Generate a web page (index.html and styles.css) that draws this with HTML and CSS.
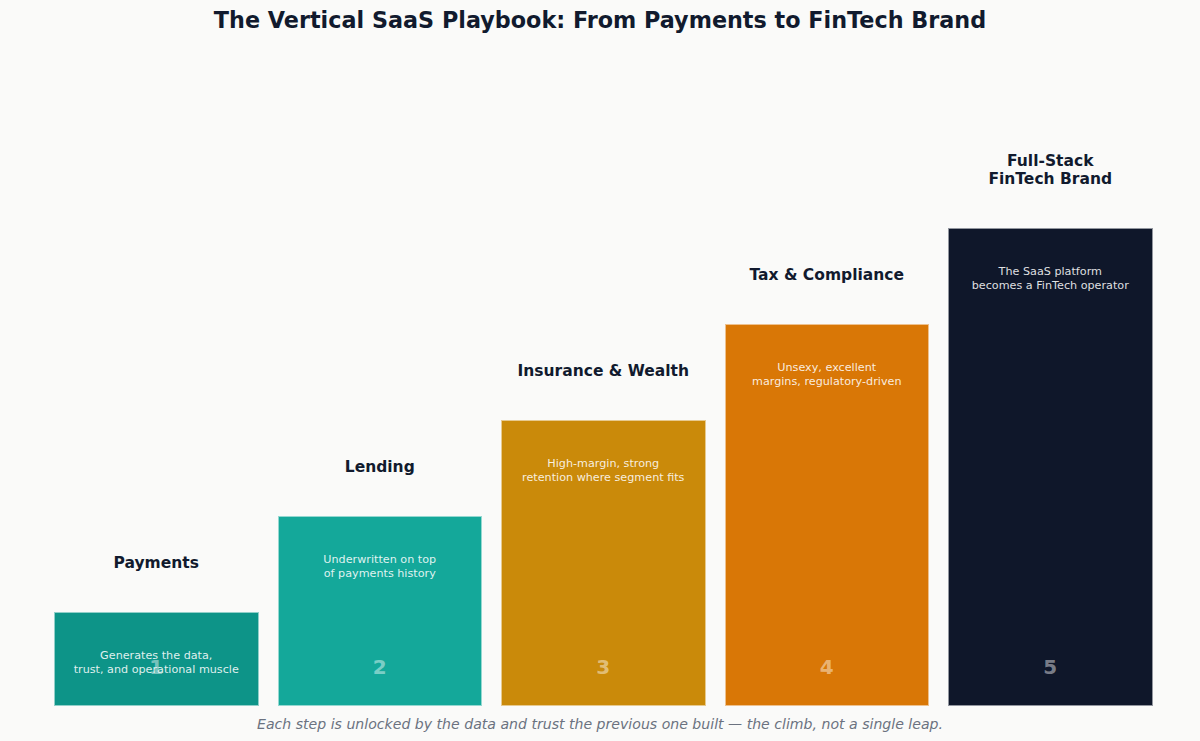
FILE: index.html
```html
<!DOCTYPE html>
<html lang="en">
<head>
<meta charset="utf-8">
<title>The Vertical SaaS Playbook</title>
<link rel="stylesheet" href="styles.css">
</head>
<body>
<div class="page">
  <h1 class="title">The Vertical SaaS Playbook: From Payments to FinTech Brand</h1>
  <div class="chart">
    <div class="step">
      <div class="label">Payments</div>
      <div class="bar bar-1" style="height:94px">
        <div class="desc">Generates the data,<br>trust, and operational muscle</div>
        <div class="num">1</div>
      </div>
    </div>
    <div class="step">
      <div class="label">Lending</div>
      <div class="bar bar-2" style="height:190px">
        <div class="desc">Underwritten on top<br>of payments history</div>
        <div class="num">2</div>
      </div>
    </div>
    <div class="step">
      <div class="label">Insurance &amp; Wealth</div>
      <div class="bar bar-3" style="height:286px">
        <div class="desc">High-margin, strong<br>retention where segment fits</div>
        <div class="num">3</div>
      </div>
    </div>
    <div class="step">
      <div class="label">Tax &amp; Compliance</div>
      <div class="bar bar-4" style="height:382px">
        <div class="desc">Unsexy, excellent<br>margins, regulatory-driven</div>
        <div class="num">4</div>
      </div>
    </div>
    <div class="step">
      <div class="label">Full-Stack<br>FinTech Brand</div>
      <div class="bar bar-5" style="height:478px">
        <div class="desc">The SaaS platform<br>becomes a FinTech operator</div>
        <div class="num">5</div>
      </div>
    </div>
  </div>
  <div class="footer">Each step is unlocked by the data and trust the previous one built — the climb, not a single leap.</div>
</div>
</body>
</html>
```

FILE: styles.css
```css
* { box-sizing: border-box; }
html, body {
  margin: 0;
  padding: 0;
  background: #fafaf9;
}
body {
  font-family: "DejaVu Sans", "Liberation Sans", sans-serif;
  color: #0f172a;
}
.page {
  width: 1200px;
  height: 741px;
  display: flex;
  flex-direction: column;
}
.title {
  margin: 0;
  padding-top: 7px;
  font-size: 22.3px;
  line-height: 26px;
  font-weight: bold;
  text-align: center;
  color: #111a2e;
}
.chart {
  flex: 1;
  display: flex;
  align-items: flex-end;
  gap: 19px;
  padding: 0 47px 0 54px;
}
.step {
  width: 204.5px;
  display: flex;
  flex-direction: column;
}
.label {
  font-size: 15.5px;
  line-height: 18px;
  font-weight: bold;
  text-align: center;
  margin-bottom: 40px;
  color: #111a2e;
}
.bar {
  position: relative;
  border: 1px solid rgba(255, 255, 255, 0.55);
  text-align: center;
}
.bar-1 { background: #0d9488; }
.bar-2 { background: #14a89a; }
.bar-3 { background: #ca8a0a; }
.bar-4 { background: #d97706; }
.bar-5 { background: #0f172a; }
.desc {
  padding-top: 36px;
  font-size: 11.2px;
  line-height: 14px;
  color: rgba(255, 255, 255, 0.88);
}
.num {
  position: absolute;
  left: 0;
  right: 0;
  bottom: 26px;
  font-size: 20px;
  line-height: 24px;
  font-weight: bold;
  color: rgba(255, 255, 255, 0.45);
}
.footer {
  height: 35px;
  line-height: 36px;
  text-align: center;
  font-style: italic;
  font-size: 14.1px;
  color: #6b7280;
}
```
